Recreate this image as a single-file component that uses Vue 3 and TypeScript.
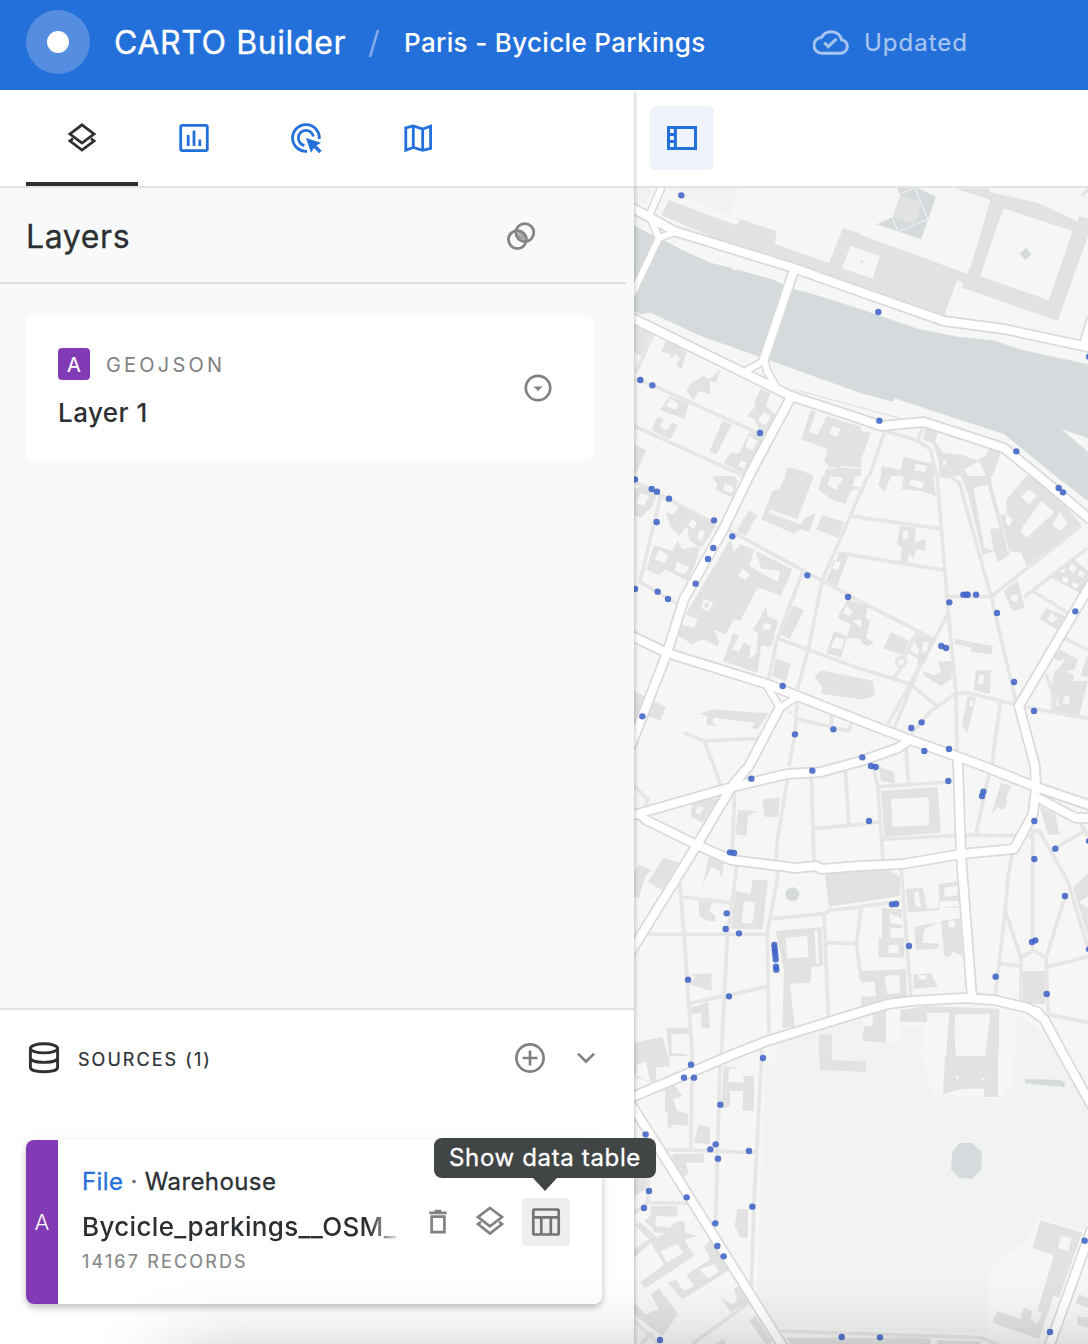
<script setup lang="ts">
interface Tile {
  x: number
  y: number
  streets: string
  buildings: string
  points: [number, number][]
}

// Map features, grouped per tile; tile units are a third of a pixel.
const tiles: Tile[] = [
  {
    x: 634,
    y: 186,
    streets: 'M57 445L5 560M0 578L55 597L380 745M0 720L330 870',
    buildings:
      'M105 42L307 118L322 100L427 135L423 174L585 231L627 126L681 143V305L400 215L250 160L82 88ZM650 180L623 247L681 266V190Z' +
      'M0 415L50 440L22 510L0 500Z M98 460L158 498L143 550L128 540L138 515L122 503L113 516L103 500L80 500Z' +
      'M260 550L245 590L228 585V625L195 615L177 643L158 615L170 590L195 580L207 569L225 580L238 570Z' +
      'M107 630L165 655L150 698L78 672ZM110 638L95 660L126 672L135 655Z' +
      'M70 693L90 700L77 720L90 733L105 728L112 708L131 718L108 760L52 732Z M0 775L37 793L5 865H0Z' +
      'M265 705L293 715L248 805L226 797Z' +
      'M380 608L410 622L395 660L427 690L370 800L342 850L340 870L268 830L290 800L315 803L345 740L380 745L362 700L340 690L365 660L362 645Z' +
      'M345 750L335 782L355 793L370 765ZM390 678L372 705L395 718L412 690ZM320 822L338 830L330 848L313 840Z' +
      'M530 672L546 677L525 738L550 747L578 690L681 722V845L630 840L590 850L570 825L582 790L502 760ZM595 720L586 743L610 752L620 728Z' +
      'M460 843L505 855L540 870H452ZM575 850L600 842L681 850V870H570Z',
    points: [[142, 28], [19, 582], [55, 598], [378, 741]],
  },
  {
    x: 861,
    y: 186,
    streets: 'M70 740L25 870M70 735L165 762L208 790L228 870M185 725L170 762M685 8L662 30',
    buildings:
      'M282 7H385V18L530 50L650 107L655 90L681 98V150L590 405L305 305V290L288 283L250 388L0 310V147L318 263L330 240L388 42Z' +
      'M427 67L358 270L563 343L635 135ZM0 190V266L35 277L57 210Z' +
      'M0 735L30 740L3 815H0Z M60 840L120 852L128 813L213 833L222 870H60ZM165 833L158 853L192 858L198 840Z' +
      'M195 725L230 740L222 765L245 800L305 808L345 822L375 810L385 787L420 800L395 870H235L232 820L215 770L185 762ZM246 822L245 836L255 838L257 824ZM355 825L310 850L322 870H375Z',
    points: [[52, 378], [55, 704], [466, 796], [684, 512]],
  },
  {
    x: 634,
    y: 476,
    streets:
      'M0 15L85 60L245 145M270 155L520 290L681 378M80 60L18 318L140 390M688 30L565 312L523 520L490 640M655 122H681M610 230L681 242' +
      'M505 290L430 487L403 615M430 487L681 580M150 770L210 795L375 787M210 795L240 870M490 680L483 775L465 870M490 730L645 765L652 740M593 750V715',
    buildings:
      'M240 0H300L312 15L298 65L245 42L250 20L235 10ZM275 22L265 42L293 52L300 35Z' +
      'M0 40L25 30L70 50L55 90L20 125L0 118ZM20 50L5 80L30 90L45 60Z' +
      'M455 0H540L523 45L490 130L408 100L405 112L500 145L515 125L545 112L525 168L500 160L480 173L382 130L415 45L435 40Z' +
      'M345 103L370 118L335 180L307 165Z M563 118L630 138L612 186L547 160Z' +
      'M565 0H665L655 30L681 35L650 45L635 85L590 70L553 40ZM590 0L580 28L605 42L628 5Z' +
      'M135 90L245 150L200 220L165 190L160 150L135 180L112 155L95 110L120 115ZM173 130L163 148L180 160L188 140ZM198 160L190 185L203 195L212 168Z' +
      'M60 207L115 225L130 195L145 220L200 210L185 260L160 315L95 280L75 298L37 280ZM75 220L62 250L90 262L105 240ZM128 257L122 285L155 293L165 272Z' +
      'M290 190L300 228L320 205L360 222L345 270L432 318L438 285L382 278L365 225L475 280L440 360L420 350L370 335L318 435L300 430L275 475L240 462L255 495L250 510L205 490L175 505L130 478L140 445L180 455L190 430L155 415L285 195Z' +
      'M325 278L312 300L335 312L347 295ZM208 368L202 397L225 408L238 380Z M213 380L226 385L220 397L211 392Z' +
      'M297 472L315 480L295 520L315 528L328 500L350 510L345 550L368 530L372 470L355 462L370 440L398 390L400 420L433 435L412 512L382 508L370 590L267 555ZM390 440L385 460L408 462L410 445Z' +
      'M477 388L510 403L467 490L440 475Z M425 548L470 563L455 617L415 600Z M541 605L560 583L681 607V670L562 653L565 630Z' +
      'M615 235L642 240L610 330L575 315ZM598 252L590 278L612 282L620 258Z' +
      'M640 370L681 385V430L655 435L681 455V490L640 485L620 545L577 530L600 465L640 480L650 445L610 425ZM635 390L628 412L648 420L657 403ZM605 485L590 515L625 520L630 490Z' +
      'M0 645L30 660L95 693L80 733L45 722L10 740H0ZM197 713L235 700L405 712L370 760L352 757L362 740L240 725L235 740L250 748H217L220 722Z M468 703L475 713H462Z',
    points: [
      [3, 10], [53, 39], [69, 47], [105, 68], [68, 138], [240, 133], [295, 181], [238, 216], [222, 249], [185, 323],
      [3, 339], [71, 347], [102, 369], [520, 298], [642, 363], [446, 630], [25, 721], [483, 775], [598, 760],
    ],
  },
  {
    x: 861,
    y: 476,
    streets:
      'M20 0L0 50M228 0L262 410L285 650L288 830M235 0L270 3L295 20L390 360L468 690M0 125L235 158M0 242L255 283M262 362H390L660 150' +
      'M262 410L215 500L80 745M0 378L220 490M0 578L150 625L225 688M490 362L681 215M515 345L620 410M610 487L681 522M121 575L95 610M130 540L168 470' +
      'M140 525L175 545V575L100 755M150 775L210 705L285 652L320 650L470 687L570 708L681 727M418 680L392 870M555 595L575 650V708M135 810L138 870' +
      'M107 558a14 14 0 1 0 28 0a14 14 0 1 0 -28 0',
    buildings:
      'M60 0H90L70 48L52 25Z M128 0H215L225 60L180 45L122 40ZM150 8L145 25L180 40L190 20Z' +
      'M300 0H390L392 25L447 235L410 260L400 225L365 238L320 50ZM337 35L370 215L398 225L387 160L415 155L380 27Z' +
      'M495 0H540L660 145L497 270L480 230L440 225L415 118L437 115V70ZM505 38L480 62L505 85L527 60ZM540 75L477 165L497 185L580 108ZM597 107L573 148L600 165L620 140ZM437 115L432 140L445 152L455 130Z' +
      'M117 150L165 155L160 200L194 188L193 225L165 220L157 250L145 230L138 260L120 258L122 215L108 205ZM125 165V190H142V165Z' +
      'M470 312L491 395L455 407L428 345ZM455 355L448 372L468 378L472 358Z' +
      'M635 247L681 285V310L655 350L572 305ZM632 262L622 280L638 292L647 275ZM607 300L602 314L618 322L624 308ZM638 318L632 330L647 338L654 326ZM657 282L650 296L665 305L673 292ZM605 274L592 285L606 292L613 282Z' +
      'M555 397L612 420L590 462L537 430ZM570 410L560 432L575 440L590 425Z' +
      'M595 520L650 550L640 583L615 585L640 600L637 615H681L655 717L580 705L578 650L570 640L580 590L590 580L615 548L590 555L575 545ZM612 660L605 683H625V660ZM590 658L585 690L595 692Z' +
      'M681 535V605L658 600ZM90 468L145 495L125 538L67 517Z M170 475L223 490L190 565L170 560L175 520L160 500ZM185 498L183 530L200 525L203 498Z' +
      'M230 558L272 555V608L240 630L190 600L185 585L220 598L240 585Z M282 488L396 510L392 535L330 528L332 515L280 503Z' +
      'M345 583L390 582L387 655L338 642ZM355 598L350 622L365 628L370 598Z M320 660L345 665L318 770L303 745ZM327 672L324 690L334 692L337 674Z' +
      'M0 380L20 390L12 425L28 435L15 485L40 500L20 510L0 500Z M0 607L35 615L42 660L0 672Z',
    points: [
      [593, 36], [606, 49], [307, 356], [316, 356], [320, 356], [345, 356], [265, 379], [408, 411], [643, 406], [241, 510],
      [255, 516], [459, 618], [519, 705], [182, 739], [151, 756], [190, 825], [264, 819], [4, 844], [30, 870], [44, 873],
    ],
  },
  {
    x: 634,
    y: 766,
    streets:
      'M0 60L42 100L20 150M240 0L260 60M302 75L295 260M310 290L280 510L262 870M137 350L150 505L175 870M145 393L290 410M45 505H400' +
      'M462 30L430 220L425 310L432 330L400 500L405 810M532 25L540 290M634 10L645 175M540 188L681 175M415 458L572 443L588 432L681 424' +
      'M570 443L583 755M575 530L668 533M681 430L668 533L681 640M168 712L400 662M383 840V870',
    buildings:
      'M175 112L195 100L255 98L205 170L170 150ZM195 120L183 135L195 148L210 125Z M312 132L368 135L342 150L337 210L305 205Z' +
      'M385 100L438 94L433 153L392 152Z M225 270L268 285L265 340L255 312L232 302L205 362Z M88 275L135 290L85 372L42 348Z' +
      'M15 295L55 313L35 328L15 395L0 392V320Z M355 342H402L385 490L290 488L305 375L350 383ZM330 405L323 470L355 473L363 410Z' +
      'M195 405L235 410L225 435L243 448L245 467L215 463L195 447Z M233 622V675L165 655L185 635L172 625Z M172 725L222 708L228 787L202 785V740L172 745Z' +
      'M97 787H165V803L112 805L113 860L160 865V870H105Z M0 830L85 813L102 870H0Z M573 325L681 315V408L585 422Z' +
      'M425 495L563 483L567 600L533 603L528 650L468 653L482 782L445 787L450 610ZM455 515L460 578L523 572L520 510ZM541 495L547 595L556 594L551 494Z M555 805H593V870H555Z',
    points: [
      [352, 38], [535, 14], [288, 259], [300, 261], [278, 442], [275, 489], [315, 502], [421, 537], [422, 548], [423, 558],
      [424, 568], [425, 580], [426, 602], [427, 611], [162, 641], [285, 691], [387, 876],
    ],
  },
  {
    x: 861,
    y: 766,
    streets:
      'M37 0L50 60L66 280M55 62L265 48M138 0L143 50M0 175L55 168M385 20L345 203M65 220L310 207L515 210M120 300L150 695M0 422L120 405' +
      'M455 255L440 340L433 435L402 690M433 435L480 575M515 190V550M515 195H535L620 345L681 545M585 245L670 195M650 160L681 210' +
      'M615 385L555 575M480 710V575L518 553L555 575L562 740M415 593L480 600M560 602L681 572M560 745L681 770',
    buildings:
      'M60 75L230 63L240 200L70 213ZM90 100L95 182L205 178L203 93Z M420 50L450 60L435 98L440 110L427 132L410 122L390 147L405 100Z' +
      'M53 0L100 20L102 53L60 45Z M0 310L65 302L117 332V390L0 408Z M135 370L185 363L198 428L294 420L292 345L232 355L236 432L140 440ZM160 378L162 420L180 425L172 376ZM250 365V393L290 388V360Z' +
      'M232 425H294V405H232ZM240 465L298 457L305 570L275 555L265 572L250 570ZM263 465V485L282 482V463Z M160 482L235 468L190 490L185 530L235 533L230 548L165 552Z' +
      'M63 425L122 430V458L85 440L88 470L125 478V487H88V515H130V575L52 573L53 515H63ZM82 537V562H112V537Z' +
      'M0 615L135 610L138 700L75 705L0 720V692L45 690L40 645L0 650ZM70 630L80 685L117 680L115 627Z M157 625L210 622L230 662L158 668ZM173 628V640H195V628Z' +
      'M485 615H553V713H487Z M535 120L583 145L595 205L562 207Z M635 365L681 320V510ZM681 390L653 410L681 425Z' +
      'M195 720L415 728L413 870H372L388 745H283L280 800L285 870H255L265 740H198V768H118V732Z M35 735L75 730V832L3 825L10 780H35Z',
    points: [
      [262, 45], [367, 77], [363, 90], [24, 165], [520, 165], [583, 248], [684, 225], [520, 279], [612, 390], [93, 415],
      [105, 414], [144, 540], [523, 523], [513, 528], [684, 550], [404, 632], [557, 684],
    ],
  },
  {
    x: 634,
    y: 1056,
    streets:
      'M258 20L245 500M175 0L170 285M85 280L370 290M383 0L360 440L352 700M42 370V440L160 442M0 470L42 440M175 864L352 735' +
      'M0 795L75 864M20 864L55 830M440 825L1040 845L1090 864',
    buildings:
      'M0 0H105L108 30L65 35L68 75L45 78L0 55ZM10 25L5 65L48 75L35 15Z M93 95L120 85L145 120L118 130L130 165L162 172V210L118 205L102 222L100 170L93 168Z' +
      'M555 0H593V12L696 17V48L560 42Z M933 0H1092V123H1050V98H985L927 115ZM967 58V70H975V60ZM1042 66V72H1053V66Z' +
      'M268 30L315 35L285 40L283 78L328 80V60H360V165L325 163L328 105H288V150L262 160Z M192 208L228 212V265L180 260Z' +
      'M120 293H210V320H155L165 350L143 370L110 310Z M310 460L342 458V545H320L302 510Z M0 365H35V400L0 420Z' +
      'M50 450H130V482L65 480V510L105 515L133 495H152V530L190 540L152 552L180 600L35 697L18 680L90 625L50 560L0 605V580L45 550L0 505L20 500L70 545L95 530H60L55 515L30 495L50 480ZM80 585L98 620L148 590L130 565Z' +
      'M210 570L235 550L265 600L290 640L145 730L100 680L125 672L150 705L180 690L157 655L230 610ZM195 640L225 668L256 645L240 625Z' +
      'M50 715L75 697L132 775L85 840L0 775V740L35 775L75 760Z M320 685L352 735L290 768L260 725L295 745L310 730L300 700Z M345 793L365 780L415 860L395 864Z' +
      'M1220 493L1345 530L1275 725L1258 720L1215 850L1075 800L1090 765L1158 790L1170 753L1195 765L1190 790L1210 803L1225 770L1210 765L1260 597L1195 575ZM1282 538L1272 575L1303 585L1312 548Z' +
      'M1335 715L1362 725V755L1325 742Z M1330 780L1362 785V815L1330 808Z M455 845H830L890 848V864H470Z M910 852L1040 856V864H910Z M245 864L268 850L275 864Z',
    points: [
      [171, 26], [150, 65], [180, 65], [259, 146], [35, 235], [245, 265], [229, 280], [345, 285], [252, 308], [45, 405],
      [158, 424], [30, 456], [355, 452], [244, 502], [250, 570], [269, 601], [78, 852], [623, 843], [738, 844], [1248, 828], [1352, 554],
    ],
  },
]

const roads =
  'M630 207L651 218L674 231L794 268L861 292L944 321L1004 329L1083 346L1092 348M1092 318L1084 345' +
  'M794 270L764 359' +
  'M630 317L724 363L791 396L861 419L881 426L924 422L1004 448L1041 478L1092 521M791 397L749 476L724 528L684 599L667 653L630 748' +
  'M630 635L667 653L767 684L861 721L908 739L978 764L1036 787L1092 806M780 707L749 766L732 786L697 845L630 953' +
  'M630 816L732 787L787 774L821 772L861 761L898 748L910 740M639 813L646 820L697 845L731 860L796 868L816 866L821 869L861 866L903 864L961 854L1014 849L1033 814L1036 788L1035 766L1019 706L1092 582' +
  'M957 757L958 766L961 854L972 998M1036 797L1076 818L1092 818' +
  'M630 1098L734 1054L767 1041L861 1012L888 1004L911 1001L964 998L994 1000L1028 1008L1044 1019L1064 1056L1092 1106' +
  'M630 1103L650 1134L785 1350M1092 1228L1048 1350'

// Slip roads and junction branches, narrower than the avenues.
const links =
  'M663 184L649 216M650 217L659 238L630 299M659 238L678 231M764 357L762 362L744 372M764 357L767 371L777 388M767 686L780 708L797 697M1024 1007L1038 1011L1049 1025'

const tabs = ['layers', 'widgets', 'interactions', 'basemap'] as const
const activeTab = 'layers'
</script>

<template>
  <div class="app">
    <header class="topbar">
      <div class="logo"><span></span></div>
      <h1>CARTO Builder</h1>
      <svg class="slash" width="12" height="30" viewBox="0 0 12 30"><path d="M10 1L2 28" /></svg>
      <span class="map-name">Paris - Bycicle Parkings</span>
      <div class="status">
        <svg width="36" height="26" viewBox="0 0 36 26">
          <path d="M9 24.2H27.8A6.8 6.8 0 0 0 28.6 10.7A10.9 10.9 0 0 0 8.4 8.6A7.8 7.8 0 0 0 9 24.2Z" />
          <path d="M11.3 13.6L15.3 17.6L23.4 9.8" />
        </svg>
        <span>Updated</span>
      </div>
    </header>

    <div class="body">
      <aside class="panel">
        <nav class="tabs">
          <button v-for="tab in tabs" :key="tab" class="tab" :class="{ active: tab === activeTab }">
            <svg width="36" height="36" viewBox="0 0 36 36">
              <template v-if="tab === 'layers'">
                <path d="M18 4.8L30 14L18 23L6 14Z" />
                <path d="M9 18.7L6 21L18 30L30 21L27 18.7" />
              </template>
              <template v-else-if="tab === 'widgets'">
                <rect x="4.7" y="5.4" width="26.6" height="25.2" rx="1.6" />
                <path d="M12.2 15V26M18 10.4V26M23.8 19.6V26" />
              </template>
              <template v-else-if="tab === 'interactions'">
                <path d="M31.3 19A13.4 13.4 0 1 0 19 31.3" />
                <path d="M25.4 16.6A7.6 7.6 0 1 0 16.4 25.4" />
                <path class="solid" d="M18 18L33 22.7L28.4 25.4L33.6 30.8L31.2 33.2L25.9 28L23 32.8Z" />
              </template>
              <template v-else>
                <path d="M5.8 7.8L13.3 6L22.7 9L30.6 6.2V28.4L22.7 30.4L13.3 27.4L5.8 30.2ZM13.3 6V27.4M22.7 9V30.4" />
              </template>
            </svg>
          </button>
        </nav>

        <section class="layers">
          <div class="layers-head">
            <h2>Layers</h2>
            <svg class="blend" width="30" height="30" viewBox="0 0 30 30">
              <path class="overlap" d="M10 10A8.8 8.8 0 0 1 20 19.5A9 9 0 0 1 10 10Z" />
              <path class="hatch" d="M11 12.5L18.5 19M13 11L19.5 17M11.5 15.5L15 18.5M12 17L18 11.5M14.5 18.5L19 14" />
              <circle cx="11.4" cy="18.6" r="9" />
              <circle cx="18.8" cy="11.6" r="9" />
            </svg>
          </div>
          <div class="layer-card">
            <div class="layer-info">
              <div class="layer-type"><span class="badge">A</span><span class="kind">GEOJSON</span></div>
              <div class="layer-name">Layer 1</div>
            </div>
            <svg width="28" height="28" viewBox="0 0 28 28">
              <circle cx="14" cy="14" r="12.2" />
              <path class="solid" d="M9.4 12.5H18.6L14 17Z" />
            </svg>
          </div>
        </section>

        <section class="sources">
          <div class="sources-head">
            <svg class="db" width="32" height="32" viewBox="0 0 32 32">
              <ellipse cx="16" cy="6.3" rx="13.6" ry="4.6" />
              <path d="M2.4 6.3V25.3C2.4 28 8 29.8 16 29.8S29.6 28 29.6 25.3V6.3M2.4 15.8C2.4 18.8 8.5 20.4 16 20.4S29.6 18.8 29.6 15.8" />
            </svg>
            <span class="sources-title">SOURCES (1)</span>
            <svg class="add" width="32" height="32" viewBox="0 0 32 32">
              <circle cx="16" cy="16" r="13.6" />
              <path d="M16 8.5V23.5M8.5 16H23.5" />
            </svg>
            <svg class="chev" width="20" height="14" viewBox="0 0 20 14"><path d="M2 2.6L10 10.6L18 2.6" /></svg>
          </div>

          <div class="source-card">
            <div class="stripe">A</div>
            <div class="source-info">
              <div class="source-type"><a>File</a><i>·</i>Warehouse</div>
              <div class="source-name">Bycicle_parkings__OSM_</div>
              <div class="records">14167 RECORDS</div>
            </div>
            <div class="actions">
              <svg width="20" height="26" viewBox="0 0 20 26">
                <path d="M3.6 7.6H16.4V23.2H3.6ZM1.3 3.9H18.7M6.7 2.2H13.3" />
              </svg>
              <svg class="stack" width="36" height="36" viewBox="0 0 36 36">
                <path d="M18 5L30 14L18 23.2L6 14Z" />
                <path d="M9 18.7L6 21L18 30.6L30 21L27 18.7" />
              </svg>
              <button class="table-btn">
                <svg width="30" height="30" viewBox="0 0 30 30">
                  <path d="M3.5 2.5H26.5Q27.7 2.5 27.7 3.7V26.3Q27.7 27.5 26.5 27.5H3.5Q2.3 27.5 2.3 26.3V3.7Q2.3 2.5 3.5 2.5ZM2.3 10.3H27.7M10.3 10.3V27.5M19.8 10.3V27.5" />
                </svg>
                <span class="tooltip">Show data table</span>
              </button>
            </div>
          </div>
        </section>
      </aside>

      <main class="workspace">
        <div class="toolbar">
          <button>
            <svg width="30" height="24" viewBox="0 0 30 24">
              <path d="M1.5 1.5H28.5V22.5H1.5ZM8.4 1.5V22.5M1.5 8.5H8.4M1.5 15.5H8.4" />
            </svg>
          </button>
        </div>
        <svg class="map" width="454" height="1156" viewBox="634 188 454 1156">
          <rect class="land" x="634" y="188" width="454" height="1156" />
          <path class="park" d="M634 188H652L646 206L634 204ZM666 188H737L729 215L694 201ZM776 1043L862 1018V1043H901V1026H923L921 1056L932 1093L998 1099L1014 1084L1016 1015L1035 1026L1050 1040L1088 1108V1222L1082 1231L1038 1218L1029 1238L990 1268L987 1333L756 1326L765 1066L775 1063Z" />
          <g transform="translate(634 186) scale(.33333)" class="water">
            <path d="M0 118L60 150L105 170L140 190L230 230L295 246L298 254L306 250L415 280L480 310L525 320L681 370L851 428L971 452L1076 463L1170 493L1362 535V757L1281 728L1362 798V945L1264 870L1111 745L781 637L776 647L681 622L385 515L200 450L50 380L20 385L0 375Z" />
            <path d="M786 0H841L906 33L861 160L729 115L776 92L799 28ZM1176 185L1193 205L1174 222L1157 204ZM681 221L692 228L681 231Z" />
            <circle cx="475" cy="2125" r="21" />
            <path d="M1175 2679L1280 2682L1295 2690L1290 2703L1173 2692ZM975 2871H1015L1044 2898L1041 2953L1013 2978L975 2976L951 2950L955 2898Z" />
          </g>
          <g transform="translate(861 186) scale(.33333)">
            <path class="bldg" d="M120 28L180 50L160 115L95 92Z" />
            <path class="dash" d="M92 92L112 137L200 100L162 7L112 25" />
            <path class="lane" d="M-201 610L0 665L130 700" />
            <path class="lane" d="M108 228L197 260L170 328L78 293Z" />
          </g>
          <g v-for="(t, i) in tiles" :key="i" :transform="`translate(${t.x} ${t.y}) scale(.33333)`">
            <path class="street" :d="t.streets" />
            <path class="bldg" :d="t.buildings" />
          </g>
          <path class="casing" :d="roads" />
          <path class="casing link" :d="links" />
          <path class="road" :d="roads" />
          <path class="road link" :d="links" />
          <g v-for="(t, i) in tiles" :key="'p' + i" :transform="`translate(${t.x} ${t.y}) scale(.33333)`">
            <circle v-for="(p, j) in t.points" :key="j" class="point" :cx="p[0]" :cy="p[1]" r="9.6" />
          </g>
        </svg>
      </main>
    </div>
    <div class="bottom-shade"></div>
  </div>
</template>

<style>
body {
  margin: 0;
}
</style>

<style scoped>
.app {
  position: relative;
  width: 1088px;
  height: 1344px;
  overflow: hidden;
  display: flex;
  flex-direction: column;
  font-family: Inter, 'Liberation Sans', sans-serif;
  color: #2c3032;
  background: #fff;
}
.app * {
  box-sizing: border-box;
}
svg {
  display: block;
  flex: none;
  fill: none;
}
button {
  border: 0;
  padding: 0;
  background: none;
  font: inherit;
}
h1,
h2 {
  margin: 0;
  font-weight: 400;
}
.topbar {
  height: 90px;
  flex: none;
  display: flex;
  align-items: center;
  padding: 0 0 6px 26px;
  background: #2470da;
  color: #fff;
  white-space: nowrap;
}
.logo {
  width: 64px;
  height: 64px;
  border-radius: 50%;
  background: #558de1;
  display: flex;
  align-items: center;
  justify-content: center;
}
.logo span {
  width: 22px;
  height: 22px;
  border-radius: 50%;
  background: #fff;
}
h1 {
  width: 254px;
  margin: 2px 0 0 24px;
  font-size: 32px;
  font-weight: 400;
  line-height: 40px;
  letter-spacing: 0.6px;
  -webkit-text-stroke: 0.3px currentColor;
}
.slash {
  margin-top: 3px;
  stroke: #82abe9;
  stroke-width: 2.6;
}
.map-name {
  width: 409px;
  margin: 1px 0 0 24px;
  font-size: 26px;
  font-weight: 500;
  letter-spacing: 0.33px;
}
.status {
  display: flex;
  align-items: center;
  gap: 15px;
  font-size: 24px;
  font-weight: 400;
  letter-spacing: 1px;
  color: #a7c5f0;
  -webkit-text-stroke: 0.2px currentColor;
}
.status svg {
  stroke: #a7c5f0;
  stroke-width: 3;
}
.body {
  flex: 1;
  min-height: 0;
  display: flex;
}
.panel {
  position: relative;
  z-index: 1;
  width: 634px;
  flex: none;
  display: flex;
  flex-direction: column;
  background: #f8faf9;
  box-shadow: 0 2px 5px rgba(0, 0, 0, 0.32);
  clip-path: inset(0 -30px 0 0);
}
.tabs {
  height: 98px;
  display: flex;
  padding-left: 26px;
  background: #fff;
  border-bottom: 2px solid #e4e6e5;
}
.tab {
  width: 112px;
  display: flex;
  align-items: center;
  justify-content: center;
  padding-top: 4px;
  border-bottom: 4px solid transparent;
  color: #2470da;
}
.tab.active {
  color: #2c3032;
  border-color: #2c3032;
}
.tab svg {
  stroke: currentColor;
  stroke-width: 2.8;
}
.tab .solid {
  fill: currentColor;
  stroke: none;
}
.layers {
  flex: 1;
}
.layers-head {
  width: 626px;
  height: 96px;
  display: flex;
  align-items: center;
  justify-content: space-between;
  padding: 2px 90px 0 26px;
  border-bottom: 2px solid #dee0df;
}
h2 {
  font-size: 32px;
  letter-spacing: 0.6px;
  -webkit-text-stroke: 0.3px currentColor;
}
.blend {
  stroke: #848686;
  stroke-width: 2.8;
}
.overlap {
  fill: #c4c6c6;
  stroke: none;
}
.hatch {
  stroke: #8c8e8e;
  stroke-width: 0.9;
}
.layer-card {
  width: 568px;
  height: 144px;
  margin: 32px 0 0 26px;
  padding: 0 42px 0 32px;
  display: flex;
  align-items: center;
  justify-content: space-between;
  border-radius: 8px;
  background: #fff;
}
.layer-card svg {
  stroke: #808282;
  stroke-width: 2.7;
}
.layer-card .solid {
  fill: #808282;
  stroke: none;
}
.layer-type {
  display: flex;
  align-items: center;
  gap: 16px;
}
.badge {
  width: 32px;
  height: 32px;
  border-radius: 4px;
  background: #833bb5;
  color: #fff;
  font-size: 20px;
  font-weight: 400;
  line-height: 34px;
  text-align: center;
  -webkit-text-stroke: 0.2px currentColor;
}
.kind {
  padding-top: 2px;
  font-size: 20px;
  letter-spacing: 3.2px;
  color: #808282;
}
.layer-name {
  margin-top: 17px;
  font-size: 26px;
  line-height: 32px;
  font-weight: 500;
  letter-spacing: 0.45px;
}
.sources {
  height: 336px;
  border-top: 2px solid #e2e5e4;
  background: #fff;
}
.sources-head {
  height: 96px;
  display: flex;
  align-items: center;
  padding-left: 28px;
}
.db {
  stroke: #2c3032;
  stroke-width: 2.9;
}
.sources-title {
  width: 452px;
  padding-left: 18px;
  padding-top: 3px;
  font-size: 18px;
  letter-spacing: 2.05px;
  -webkit-text-stroke: 0.2px currentColor;
}
.add,
.chev {
  stroke: #808282;
  stroke-width: 2.7;
}
.add {
  margin-left: 2px;
}
.chev {
  margin-left: 30px;
}
.source-card {
  width: 576px;
  height: 164px;
  margin: 34px 0 0 26px;
  display: flex;
  border-radius: 8px;
  background: #fff;
  box-shadow: 0 4px 6px rgba(0, 0, 0, 0.2), 0 1px 16px rgba(0, 0, 0, 0.05);
}
.stripe {
  width: 32px;
  flex: none;
  border-radius: 8px 0 0 8px;
  background: #833bb5;
  color: #fff;
  font-size: 22px;
  font-weight: 300;
  line-height: 164px;
  text-align: center;
  transform-origin: center;
}
.source-info {
  width: 318px;
  margin-left: 24px;
  padding-top: 26px;
  white-space: nowrap;
}
.source-type {
  font-size: 24px;
  line-height: 32px;
  letter-spacing: 0.4px;
  -webkit-text-stroke: 0.3px currentColor;
}
.source-type a {
  color: #2470da;
}
.source-type i {
  padding: 0 7px;
  font-style: normal;
  color: #6c6e6e;
}
.source-name {
  margin-top: 12px;
  font-size: 26px;
  line-height: 34px;
  font-weight: 500;
  letter-spacing: 0.33px;
  -webkit-mask-image: linear-gradient(90deg, #000 90%, transparent 101%);
  mask-image: linear-gradient(90deg, #000 90%, transparent 101%);
}
.records {
  margin-top: 6px;
  font-size: 18px;
  line-height: 24px;
  letter-spacing: 2.15px;
  color: #868888;
  -webkit-text-stroke: 0.2px currentColor;
}
.actions {
  display: flex;
  align-items: center;
  margin-left: 28px;
}
.actions svg {
  stroke: #808282;
  stroke-width: 2.7;
}
.stack {
  margin: -2px 14px 0 24px;
}
.table-btn {
  position: relative;
  width: 48px;
  height: 48px;
  display: flex;
  align-items: center;
  justify-content: center;
  border-radius: 4px;
  background: #eee;
}
.table-btn svg {
  stroke: #737575;
}
.tooltip {
  position: absolute;
  left: -88px;
  top: -60px;
  width: 222px;
  height: 40px;
  border-radius: 8px;
  background: #414546;
  color: #fff;
  font-size: 24px;
  line-height: 39px;
  letter-spacing: 0.65px;
  white-space: nowrap;
  text-align: center;
  -webkit-text-stroke: 0.3px currentColor;
}
.tooltip::after {
  content: '';
  position: absolute;
  left: 99px;
  top: 100%;
  border: 12px solid transparent;
  border-top: 13px solid #414546;
  border-bottom: 0;
}
.workspace {
  flex: 1;
  min-width: 0;
}
.toolbar {
  height: 98px;
  display: flex;
  align-items: center;
  padding-left: 16px;
  background: #fff;
  border-bottom: 2px solid #e4e6e5;
}
.toolbar button {
  width: 64px;
  height: 64px;
  display: flex;
  align-items: center;
  justify-content: center;
  border-radius: 6px;
  background: #eef3fc;
}
.toolbar svg {
  stroke: #2470da;
  stroke-width: 3;
}
.land {
  fill: #f6f6f5;
}
.park {
  fill: #f0f3f0;
}
.water {
  fill: #d5dadc;
}
.bldg {
  fill: #e2e2e2;
  fill-rule: evenodd;
}
.street {
  stroke: #e6e6e6;
  stroke-width: 11;
  stroke-linejoin: round;
}
.lane {
  stroke: #dedede;
  stroke-width: 3;
}
.dash {
  stroke: #fff;
  stroke-width: 3;
  stroke-dasharray: 8 3;
}
.casing {
  stroke: #dadada;
  stroke-width: 11.4;
  stroke-linejoin: round;
}
.casing.link {
  stroke-width: 9;
}
.road {
  stroke: #fff;
  stroke-width: 8;
  stroke-linejoin: round;
}
.road.link {
  stroke-width: 6;
}
.point {
  fill: #3f64c6;
  fill-opacity: 0.88;
}
.bottom-shade {
  position: absolute;
  z-index: 2;
  left: 170px;
  top: 1362px;
  width: 1000px;
  height: 100px;
  pointer-events: none;
  box-shadow: 0 0 80px rgba(0, 0, 0, 0.3);
}
</style>
